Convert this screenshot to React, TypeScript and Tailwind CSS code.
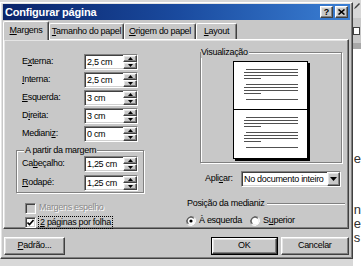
import React from 'react'

const raised =
  'border border-t-white border-l-white border-r-[#404040] border-b-[#404040] shadow-[inset_-1px_-1px_#808080,inset_1px_1px_#e4e4e4]'
const sunken =
  'border border-t-[#808080] border-l-[#808080] border-r-white border-b-white shadow-[inset_1px_1px_#404040,inset_-1px_-1px_#d0d0d0]'
const etched = 'border border-[#808080] shadow-[inset_1px_1px_#ffffff,1px_1px_#ffffff]'

function Arrow({ up }: { up?: boolean }) {
  return (
    <svg width="5" height="3" viewBox="0 0 5 3">
      <path d={up ? 'M2.5 0L5 3H0z' : 'M0 0h5L2.5 3z'} fill="#000" />
    </svg>
  )
}

function Spin({ value }: { value: string }) {
  return (
    <div className={`flex h-[16px] w-[54px] bg-white ${sunken}`}>
      <div className="flex-1 pl-[2px] leading-[14px]">{value}</div>
      <div className="flex w-[14px] flex-col">
        <div className={`flex h-[7px] items-center justify-center bg-[#c8c8c8] ${raised}`}>
          <Arrow up />
        </div>
        <div className={`flex h-[7px] items-center justify-center bg-[#c8c8c8] ${raised}`}>
          <Arrow />
        </div>
      </div>
    </div>
  )
}

function Field({ label, value }: { label: React.ReactNode; value: string }) {
  return (
    <div className="flex h-[16px] items-center">
      <span className="w-[62px]">{label}</span>
      <Spin value={value} />
    </div>
  )
}

function Radio({ checked }: { checked?: boolean }) {
  return (
    <svg width="10" height="10" viewBox="0 0 10 10">
      <path d="M8.5 1.5A5 5 0 0 0 1.5 8.5" stroke="#808080" strokeWidth="1" fill="none" />
      <path d="M1.5 8.5A5 5 0 0 0 8.5 1.5" stroke="#ffffff" strokeWidth="1" fill="none" />
      <circle cx="5" cy="5" r="3.8" fill="#fff" />
      <path d="M7.7 2.3A3.8 3.8 0 0 0 2.3 7.7" stroke="#404040" strokeWidth="1" fill="none" />
      {checked && <circle cx="5" cy="5" r="1.6" fill="#000" />}
    </svg>
  )
}

function Tab({ children, width, active }: { children: React.ReactNode; width: number; active?: boolean }) {
  return (
    <div
      className={`relative flex items-center justify-center rounded-t-[2px] border-l border-t border-r border-l-white border-t-white border-r-[#404040] bg-[#c8c8c8] shadow-[inset_-1px_0_#808080] ${
        active ? 'z-10 -mb-px h-[19px]' : 'h-[16px]'
      }`}
      style={{ width }}
    >
      {children}
    </div>
  )
}

export default function App() {
  return (
    <div className="flex h-[266px] w-[361px] overflow-hidden bg-white font-['Liberation_Sans',Arial,sans-serif] text-[9px] tracking-[-0.3px] text-black">
      {/* left: dialog over Word */}
      <div className="flex w-[353px] flex-col">
        <div className="h-[2px] bg-[#d8d8d8]" />

        <div className={`flex h-[257px] flex-col bg-[#c8c8c8] px-[2px] pt-px ${raised}`}>
          {/* Title bar */}
          <div className="flex h-[16px] items-center bg-gradient-to-r from-[#0a246a] via-[#1a4a9e] to-[#3b7fd4] pl-[2px] pr-[2px]">
            <span className="flex-1 text-[11px] font-bold tracking-[-0.2px] text-white">Configurar página</span>
            <div className="flex gap-[2px]">
              <div className={`flex h-[12px] w-[13px] items-center justify-center bg-[#c8c8c8] text-[9px] font-bold leading-none ${raised}`}>
                ?
              </div>
              <div className={`flex h-[12px] w-[13px] items-center justify-center bg-[#c8c8c8] ${raised}`}>
                <svg width="7" height="6" viewBox="0 0 7 6">
                  <path d="M0.5 0.5L6.5 5.5M6.5 0.5L0.5 5.5" stroke="#000" strokeWidth="1.6" />
                </svg>
              </div>
            </div>
          </div>

          {/* Tabs */}
          <div className="mt-px flex h-[18px] items-end">
            <Tab width={46} active>
              <span><u>M</u>argens</span>
            </Tab>
            <Tab width={75}>
              <span><u>T</u>amanho do papel</span>
            </Tab>
            <Tab width={72}>
              <span><u>O</u>rigem do papel</span>
            </Tab>
            <Tab width={41}>
              <span><u>L</u>ayout</span>
            </Tab>
          </div>

          {/* Panel */}
          <div className={`flex h-[190px] w-[346px] ${raised}`}>
            {/* left column */}
            <div className="flex w-[179px] flex-col pl-[12px] pt-[14px]">
              <div className="flex flex-col gap-[2px] pl-[6px]">
                <Field label={<>E<u>x</u>terna:</>} value="2,5 cm" />
                <Field label={<><u>I</u>nterna:</>} value="2,5 cm" />
                <Field label={<><u>E</u>squerda:</>} value="3 cm" />
                <Field label={<>D<u>i</u>reita:</>} value="3 cm" />
                <Field label={<>Mediani<u>z</u>:</>} value="0 cm" />
              </div>

              <fieldset className={`mt-[3px] w-[128px] pb-[1px] pl-[5px] ${etched}`}>
                <legend className="ml-[2px] bg-[#c8c8c8] px-px leading-[11px]">A partir da margem</legend>
                <div className="flex flex-col gap-[3px]">
                  <Field label={<>Ca<u>b</u>eçalho:</>} value="1,25 cm" />
                  <Field label={<><u>R</u>odapé:</>} value="1,25 cm" />
                </div>
              </fieldset>

              <div className="mt-[9px] flex flex-col gap-[2px] pl-[9px]">
                <div className="flex h-[12px] items-center gap-[3px]">
                  <div className={`h-[11px] w-[11px] bg-[#c8c8c8] ${sunken}`} />
                  <span className="text-[#8a8a8a] [text-shadow:1px_1px_#ffffff]">Margens espelho</span>
                </div>
                <div className="flex h-[12px] items-center gap-[2px]">
                  <div className={`flex h-[11px] w-[11px] items-center justify-center bg-white ${sunken}`}>
                    <svg width="7" height="7" viewBox="0 0 7 7">
                      <path d="M0.5 3.5L2.5 5.5L6.5 1" stroke="#000" strokeWidth="1.6" fill="none" />
                    </svg>
                  </div>
                  <span className="border border-dotted border-black px-px leading-[11px]">
                    <u>2</u> páginas por folha
                  </span>
                </div>
              </div>
            </div>

            {/* right column */}
            <div className="flex flex-1 flex-col pt-[7px]">
              <fieldset className={`ml-[17px] flex w-[142px] flex-col items-center pb-px ${etched}`}>
                <legend className="bg-[#c8c8c8] pr-px leading-[11px]">Visualização</legend>
                <svg width="77" height="100" viewBox="0 0 77 100" className="mt-[3px]">
                  <rect x="2" y="2" width="75" height="98" fill="#000" />
                  <rect x="0.5" y="0.5" width="74" height="97" fill="#fff" stroke="#000" />
                  <g fill="#505050">
                    <rect x="13" y="8" width="52" height="1" />
                    <rect x="11" y="11" width="54" height="1" />
                    <rect x="11" y="14" width="54" height="1" />
                    <rect x="11" y="17" width="17" height="1" />
                    <rect x="13" y="23" width="52" height="1" />
                    <rect x="11" y="26" width="54" height="1" />
                    <rect x="11" y="29" width="54" height="1" />
                    <rect x="11" y="32" width="17" height="1" />
                    <rect x="13" y="38" width="52" height="1" />

                    <rect x="13" y="56" width="52" height="1" />
                    <rect x="11" y="59" width="54" height="1" />
                    <rect x="11" y="62" width="54" height="1" />
                    <rect x="11" y="65" width="17" height="1" />
                    <rect x="13" y="71" width="52" height="1" />
                    <rect x="11" y="74" width="54" height="1" />
                    <rect x="11" y="77" width="54" height="1" />
                    <rect x="11" y="80" width="17" height="1" />
                    <rect x="13" y="86" width="52" height="1" />
                  </g>
                  <rect x="0" y="48" width="75" height="1" fill="#000" />
                </svg>
              </fieldset>

              <div className="ml-[22px] mt-[8px] flex h-[16px] items-center">
                <span className="w-[36px]">
                  Apli<u>c</u>ar:
                </span>
                <div className={`flex h-[16px] w-[100px] bg-white ${sunken}`}>
                  <span className="flex-1 pl-[2px] leading-[14px]">No documento inteiro</span>
                  <div className={`flex w-[13px] items-center justify-center bg-[#c8c8c8] ${raised}`}>
                    <svg width="7" height="4" viewBox="0 0 7 4">
                      <path d="M0 0h7L3.5 4z" fill="#000" />
                    </svg>
                  </div>
                </div>
              </div>

              <div className="ml-[4px] mr-[3px] mt-[11px] flex h-[11px] items-center gap-[3px]">
                <span>Posição da medianiz</span>
                <div className="h-[2px] flex-1 border-t border-t-[#808080] border-b border-b-white" />
              </div>

              <div className="ml-[3px] mt-[6px] flex h-[11px] items-center">
                <Radio checked />
                <span className="ml-[3px] w-[51px]">À esquerda</span>
                <Radio />
                <span className="ml-[3px]">
                  S<u>u</u>perior
                </span>
              </div>
            </div>
          </div>

          {/* Buttons */}
          <div className="mt-[8px] flex h-[18px]">
            <div className={`ml-px flex w-[61px] items-center justify-center bg-[#c8c8c8] ${raised}`}>
              <span><u>P</u>adrão...</span>
            </div>
            <div className="ml-auto flex w-[67px] border border-black">
              <div className={`flex flex-1 items-center justify-center bg-[#c8c8c8] ${raised}`}>OK</div>
            </div>
            <div className={`ml-[3px] mr-px flex w-[68px] items-center justify-center bg-[#c8c8c8] ${raised}`}>
              Cancelar
            </div>
          </div>
        </div>

        <div className="flex-1 bg-[#d8d8d8]" />
      </div>

      {/* right: Word window peeking */}
      <div className="flex flex-1 flex-col text-[13px] leading-none tracking-normal text-[#303030]">
        <div className="flex h-[18px] items-start justify-center bg-[#d8d8d8] pt-[2px]">
          <svg width="7" height="8" viewBox="0 0 7 8">
            <path d="M1 7L2 5L6 1L7 2L3 6z" fill="#404040" />
          </svg>
        </div>
        <div className="flex h-[25px] items-center justify-center bg-[#c8c8c8]">
          <div className="h-[8px] w-[7px] border border-[#404040] bg-white" />
        </div>
        <div className="h-[6px] bg-[#a8a8a8]" />
        <div className="flex flex-col pl-[1px] pt-[103px]">
          <span>e</span>
          <span className="mt-[38px]">n</span>
          <span className="mt-[1px]">e</span>
          <span className="mt-[1px]">s</span>
        </div>
      </div>
    </div>
  )
}
